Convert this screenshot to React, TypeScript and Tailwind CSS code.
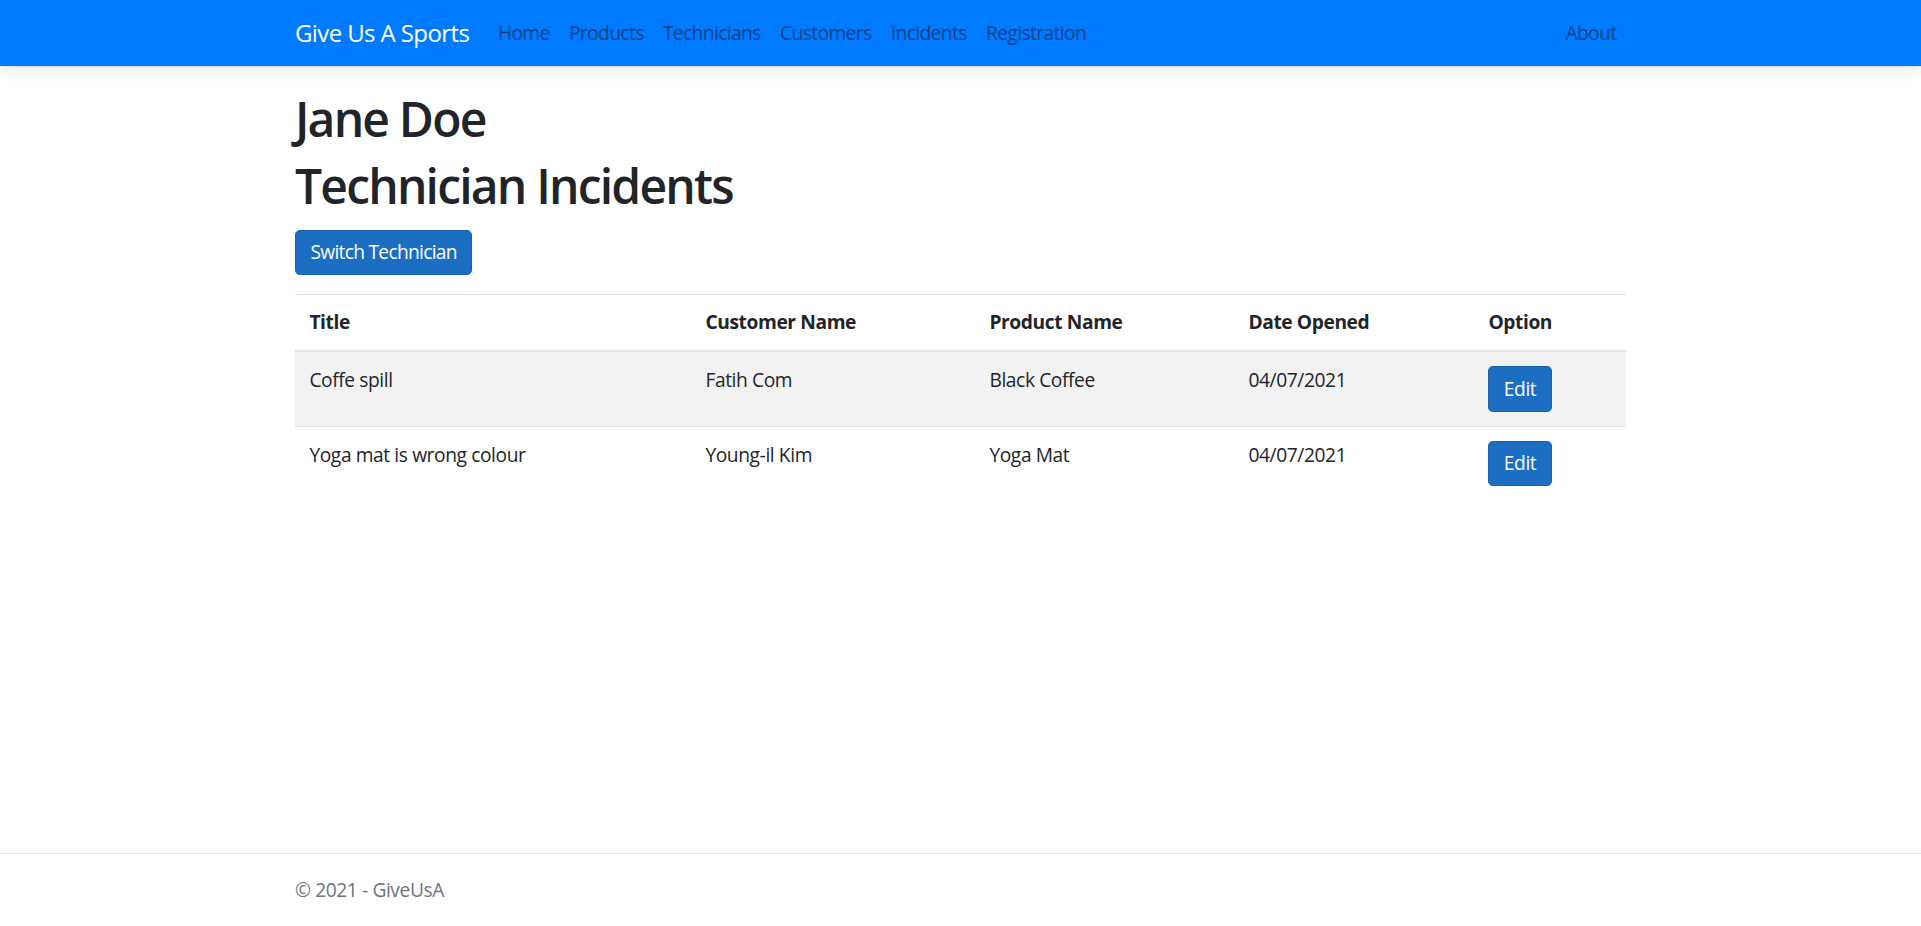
import React from 'react';

const incidents = [
  { title: 'Coffe spill', customer: 'Fatih Com', product: 'Black Coffee', date: '04/07/2021' },
  { title: 'Yoga mat is wrong colour', customer: 'Young-il Kim', product: 'Yoga Mat', date: '04/07/2021' },
];

const links = ['Home', 'Products', 'Technicians', 'Customers', 'Incidents', 'Registration'];

export default function App() {
  return (
    <div className="min-h-screen flex flex-col bg-white text-[#212529] text-[19.2px] leading-[28.8px] tracking-[-0.4px] font-['Open_Sans',sans-serif]">
      {/* Navbar */}
      <header className="h-[67px] bg-[#007bff] border-b border-[#e5e5e5] shadow-[0_5px_14px_rgba(0,0,0,0.08)]">
        <nav className="mx-auto w-[1331px] h-full flex items-center">
          <a className="text-white text-[24px] leading-[36px] tracking-[-0.6px] mr-[19px]">Give Us A Sports</a>
          <ul className="flex flex-1 tracking-[-0.6px]">
            {links.map((l) => (
              <li key={l}>
                <a className="px-[9.6px] text-black/50">{l}</a>
              </li>
            ))}
          </ul>
          <a className="px-[9.6px] text-black/50 tracking-[-0.6px]">About</a>
        </nav>
      </header>

      {/* Main */}
      <main className="mx-auto w-[1331px] pt-[23px] pb-[20px]">
        <h1 className="text-[48px] leading-[57.6px] font-semibold tracking-[-1.8px] mb-[9.6px]">Jane Doe</h1>
        <h1 className="text-[48px] leading-[57.6px] font-semibold tracking-[-1.8px] mb-[15px]">Technician Incidents</h1>
        <button className="h-[45.6px] px-[14.4px] rounded-[4.8px] bg-[#1b6ec2] border border-[#1861ac] text-white tracking-[-0.7px]">
          Switch Technician
        </button>

        <table className="w-full mt-[19px] border-collapse">
          <thead>
            <tr className="border-t border-[#dee2e6] border-b-2 border-b-[#dee2e6] text-left">
              <th className="w-[396px] px-[14.4px] py-[13px] font-bold">Title</th>
              <th className="w-[284px] px-[14.4px] py-[13px] font-bold">Customer Name</th>
              <th className="w-[259px] px-[14.4px] py-[13px] font-bold">Product Name</th>
              <th className="w-[240px] px-[14.4px] py-[13px] font-bold">Date Opened</th>
              <th className="px-[14.4px] py-[13px] font-bold">Option</th>
            </tr>
          </thead>
          <tbody>
            {incidents.map((r, i) => (
              <tr key={i} className={i % 2 === 0 ? 'bg-[#f2f2f2] border-t border-[#dee2e6]' : 'border-t border-[#dee2e6]'}>
                <td className="px-[14.4px] py-[14px] align-top">{r.title}</td>
                <td className="px-[14.4px] py-[14px] align-top">{r.customer}</td>
                <td className="px-[14.4px] py-[14px] align-top">{r.product}</td>
                <td className="px-[14.4px] py-[14px] align-top">{r.date}</td>
                <td className="px-[14.4px] py-[14px] align-top">
                  <button className="h-[45.6px] px-[14.4px] rounded-[4.8px] bg-[#1b6ec2] border border-[#1861ac] text-white">
                    Edit
                  </button>
                </td>
              </tr>
            ))}
          </tbody>
        </table>
      </main>

      {/* Footer */}
      <footer className="mt-auto border-t border-[#e5e5e5] leading-[72px] text-[#6c757d] whitespace-nowrap">
        <div className="mx-auto w-[1331px]">&copy; 2021 - GiveUsA</div>
      </footer>
    </div>
  );
}
